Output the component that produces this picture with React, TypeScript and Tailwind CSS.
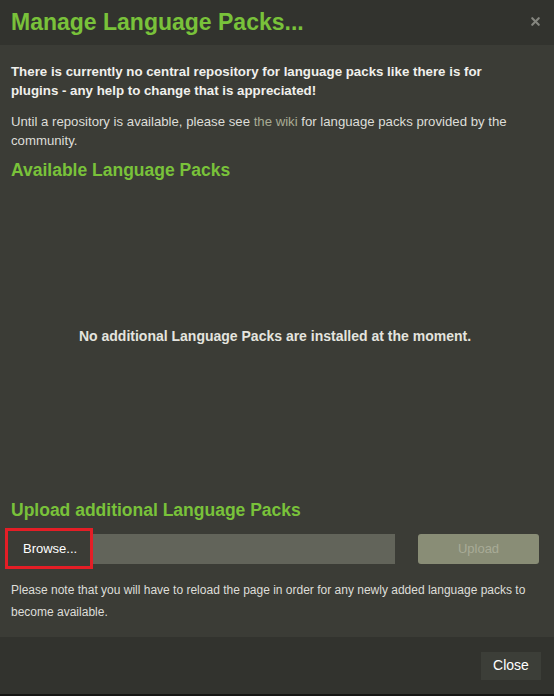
import { X } from "lucide-react";

const green = "text-[#79c23a]";

export default function App() {
  return (
    <div className="w-[554px] h-[696px] flex flex-col bg-[#3b3c36] font-['Liberation_Sans',Arial,sans-serif] text-[#e6e6e2]">
      {/* header */}
      <div className="h-[45px] shrink-0 bg-[#32332e] flex items-center justify-between pl-[11px] pr-[12px]">
        <h1 className={`text-[23px] font-bold leading-none ${green}`}>Manage Language Packs...</h1>
        <X className="w-[13px] h-[13px] text-[#85867f] mb-[2px]" strokeWidth={4} />
      </div>

      {/* body */}
      <div className="flex-1 pl-[11px] pr-[15px] pt-[17px]">
        <p className="w-[502px] text-[13.3px] font-bold leading-[19px] text-[#f0f0ec]">
          There is currently no central repository for language packs like there is for plugins - any help to
          change that is appreciated!
        </p>
        <p className="w-[502px] mt-[12px] text-[13.2px] leading-[19px] text-[#deded9]">
          Until a repository is available, please see <span className="text-[#a8ab94]">the wiki</span> for
          language packs provided by the community.
        </p>
        <h2 className={`mt-[9px] text-[17.5px] font-bold leading-[22px] ${green}`}>Available Language Packs</h2>

        <div className="h-[318px] flex items-center justify-center">
          <p className="text-[14px] font-bold text-[#e4e4df] -mt-[8px]">
            No additional Language Packs are installed at the moment.
          </p>
        </div>

        <h2 className={`text-[17.5px] font-bold leading-[22px] ${green}`}>Upload additional Language Packs</h2>

        <div className="mt-[7px] flex items-center">
          <div className="-ml-[6px] w-[88px] h-[41px] border-[3px] border-[#e41e26] bg-[#3b3c36] flex items-center pl-[15px] text-[13px] text-white">
            Browse...
          </div>
          <div className="w-[302px] h-[30px] bg-[#62645a]" />
          <button className="ml-auto w-[121px] h-[30px] rounded-[3px] bg-[#898d76] text-[13px] text-[#a8ab96]">
            Upload
          </button>
        </div>

        <p className="mt-[10px] text-[12px] leading-[22px] text-[#deded9]">
          Please note that you will have to reload the page in order for any newly added language packs to become
          available.
        </p>
      </div>

      {/* footer */}
      <div className="h-[57px] shrink-0 bg-[#32332e] flex items-center justify-end pr-[13px]">
        <button className="w-[60px] h-[28px] bg-[#3c3e38] text-[14px] text-white">Close</button>
      </div>
      <div className="h-[2px] shrink-0 bg-[#151513]" />
    </div>
  );
}
